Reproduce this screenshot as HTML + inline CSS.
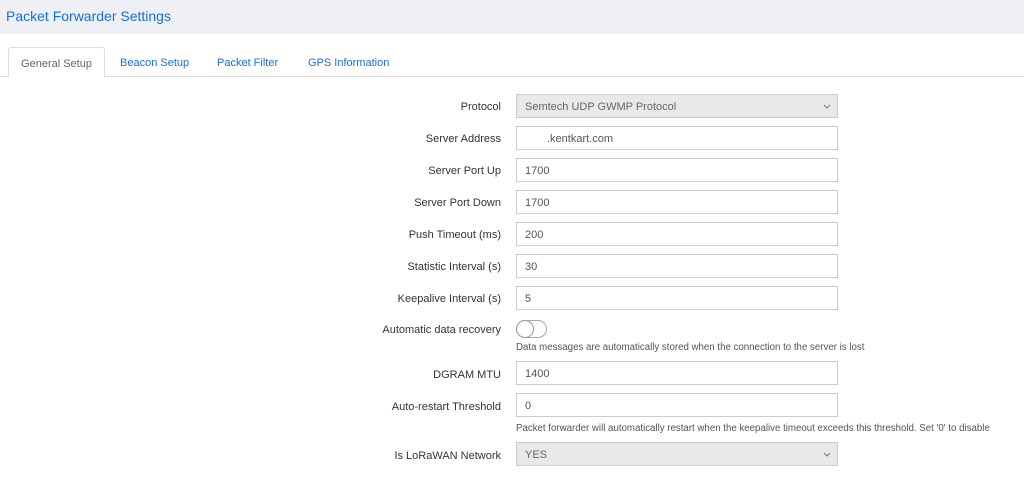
<!DOCTYPE html><html><head><style>
body{margin:0;width:1024px;height:482px;background:#fff;font-family:"Liberation Sans",Arial,sans-serif;font-size:11px;color:#333;position:relative;overflow:hidden}
.hdr{position:absolute;left:0;top:0;width:1024px;height:34px;background:#eef0f5}
.hdr span{position:absolute;left:6px;top:8px;font-size:14px;color:#1a6dd6}
.tabs{position:absolute;left:0;top:76px;width:1024px;border-top:1px solid #ddd}
.tab{position:absolute;top:57px;font-size:11px;color:#1a6dd6}
.act{position:absolute;left:8px;top:47px;width:97px;height:30px;border:1px solid #ddd;border-bottom:none;background:#fff;border-radius:3px 3px 0 0;color:#666;text-align:center;line-height:32px;box-sizing:border-box;font-size:11px}
.lbl{position:absolute;right:523px;font-size:11px;color:#333;text-align:right;white-space:nowrap}
.inp{position:absolute;left:516px;width:322px;height:24px;border:1px solid #ccc;box-sizing:border-box;padding-left:8px;line-height:24px;color:#555;background:#fff;font-size:11px}
.sel{background:#e9e9e9;color:#666}
.sel svg{position:absolute;right:6px;top:9px}
.help{position:absolute;left:516px;font-size:9.7px;color:#555;white-space:nowrap}
.tg{position:absolute;left:516px;top:320px;width:31px;height:18px;border:1px solid #aaa;border-radius:10px;box-sizing:border-box}
.tg:before{content:"";position:absolute;left:0;top:0;width:16px;height:16px;border-radius:50%;background:#fff;box-shadow:0 0 0 1px #999}
</style></head><body>
<div class="hdr"><span>Packet Forwarder Settings</span></div>
<div class="tabs"></div>
<div class="act">General Setup</div>
<div class="tab" style="left:120px">Beacon Setup</div>
<div class="tab" style="left:217px">Packet Filter</div>
<div class="tab" style="left:308px">GPS Information</div>

<div class="lbl" style="top:101px">Protocol</div><div class="inp sel" style="top:94px">Semtech UDP GWMP Protocol<svg width="8" height="5"><path d="M1 1L4 4L7 1" fill="none" stroke="#777"/></svg></div>
<div class="lbl" style="top:133px">Server Address</div><div class="inp" style="top:126px;padding-left:30px">.kentkart.com</div>
<div class="lbl" style="top:165px">Server Port Up</div><div class="inp" style="top:158px">1700</div>
<div class="lbl" style="top:197px">Server Port Down</div><div class="inp" style="top:190px">1700</div>
<div class="lbl" style="top:229px">Push Timeout (ms)</div><div class="inp" style="top:222px">200</div>
<div class="lbl" style="top:261px">Statistic Interval (s)</div><div class="inp" style="top:254px">30</div>
<div class="lbl" style="top:293px">Keepalive Interval (s)</div><div class="inp" style="top:286px">5</div>
<div class="lbl" style="top:324px">Automatic data recovery</div><div class="tg"></div>
<div class="help" style="top:342px">Data messages are automatically stored when the connection to the server is lost</div>
<div class="lbl" style="top:369px">DGRAM MTU</div><div class="inp" style="top:361px">1400</div>
<div class="lbl" style="top:401px">Auto-restart Threshold</div><div class="inp" style="top:393px">0</div>
<div class="help" style="top:423px">Packet forwarder will automatically restart when the keepalive timeout exceeds this threshold. Set '0' to disable</div>
<div class="lbl" style="top:450px">Is LoRaWAN Network</div><div class="inp sel" style="top:442px">YES<svg width="8" height="5"><path d="M1 1L4 4L7 1" fill="none" stroke="#777"/></svg></div>
</body></html>
